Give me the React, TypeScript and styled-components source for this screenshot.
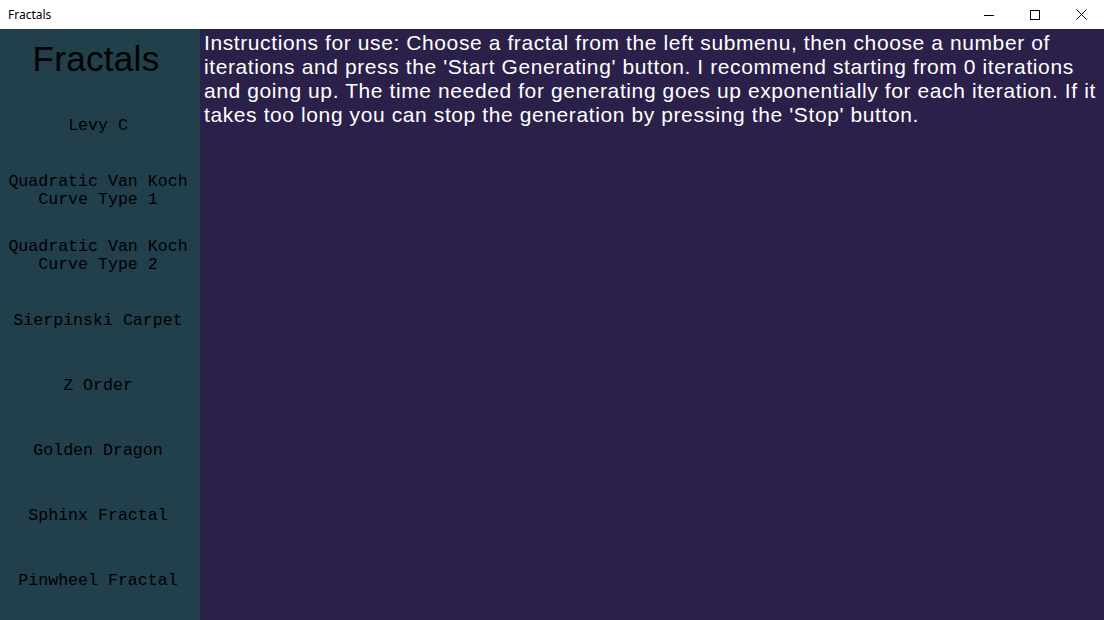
import React from "react";
import styled, { createGlobalStyle } from "styled-components";

const Global = createGlobalStyle`
  html, body { margin: 0; padding: 0; background: #2b2049; }
  #root { width: 1104px; height: 620px; }
`;

const Window = styled.div`
  width: 1104px;
  height: 620px;
  display: flex;
  flex-direction: column;
  overflow: hidden;
`;

const TitleBar = styled.div`
  height: 29px;
  background: #ffffff;
  display: flex;
  align-items: center;
  flex-shrink: 0;
`;

const TitleText = styled.div`
  flex: 1;
  padding-left: 8px;
  font-family: "Noto Sans", "Open Sans", sans-serif;
  font-size: 12px;
  color: #000;
`;

const CaptionButton = styled.div`
  width: 46px;
  height: 29px;
  display: flex;
  align-items: center;
  justify-content: center;
`;

const Body = styled.div`
  flex: 1;
  display: flex;
  min-height: 0;
`;

const Sidebar = styled.nav`
  width: 200px;
  background: #21404b;
  display: flex;
  flex-direction: column;
  flex-shrink: 0;
`;

const SideTitle = styled.div`
  height: 60px;
  margin-bottom: 4px;
  display: flex;
  align-items: center;
  justify-content: center;
  font-family: "Liberation Sans", Arial, sans-serif;
  font-size: 35px;
  letter-spacing: 0.3px;
  color: #000;
  padding-right: 8px;
`;

const MenuItem = styled.div`
  height: 65px;
  display: flex;
  align-items: center;
  justify-content: center;
  text-align: center;
  font-family: "Liberation Mono", monospace;
  font-size: 16.6px;
  line-height: 18px;
  color: #000;
  white-space: pre-line;
  padding-right: 4px;
`;

const Main = styled.main`
  flex: 1;
  padding: 2px 0 0 4px;
  color: #ffffff;
  font-family: "Liberation Sans", Arial, sans-serif;
  font-size: 21px;
  letter-spacing: 0.6px;
  line-height: 24px;
`;

const items = [
  "Levy C",
  "Quadratic Van Koch\nCurve Type 1",
  "Quadratic Van Koch\nCurve Type 2",
  "Sierpinski Carpet",
  "Z Order",
  "Golden Dragon",
  "Sphinx Fractal",
  "Pinwheel Fractal",
];

export default function App() {
  return (
    <Window>
      <Global />
      <TitleBar>
        <TitleText>Fractals</TitleText>
        <CaptionButton>
          <svg width="10" height="10" viewBox="0 0 10 10">
            <path d="M0 5.5h10" stroke="#000" strokeWidth="1" />
          </svg>
        </CaptionButton>
        <CaptionButton>
          <svg width="10" height="10" viewBox="0 0 10 10">
            <rect x="0.5" y="0.5" width="9" height="9" fill="none" stroke="#000" strokeWidth="1" />
          </svg>
        </CaptionButton>
        <CaptionButton>
          <svg width="11" height="11" viewBox="0 0 11 11">
            <path d="M0.5 0.5l10 10M10.5 0.5l-10 10" stroke="#000" strokeWidth="1" />
          </svg>
        </CaptionButton>
      </TitleBar>
      <Body>
        <Sidebar>
          <SideTitle>Fractals</SideTitle>
          {items.map((t) => (
            <MenuItem key={t}>{t}</MenuItem>
          ))}
        </Sidebar>
        <Main>
          Instructions for use: Choose a fractal from the left submenu, then choose a number of
          iterations and press the 'Start Generating' button. I recommend starting from 0 iterations
          and going up. The time needed for generating goes up exponentially for each iteration. If it
          takes too long you can stop the generation by pressing the 'Stop' button.
        </Main>
      </Body>
    </Window>
  );
}
